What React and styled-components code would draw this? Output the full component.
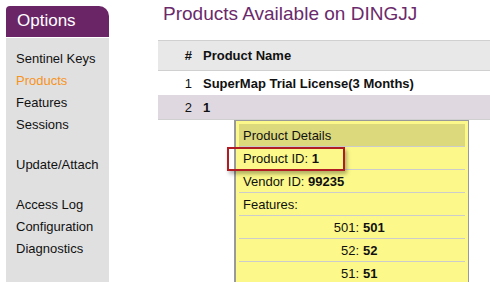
import React from 'react'
import styled, { createGlobalStyle } from 'styled-components'

const Global = createGlobalStyle`
  html, body {
    margin: 0;
    padding: 0;
    background: #fff;
    overflow: hidden;
    font-family: "Liberation Sans", Arial, sans-serif;
  }
`

const Page = styled.div`
  display: flex;
  align-items: flex-start;
  width: 490px;
  height: 282px;
  overflow: hidden;
`

const Sidebar = styled.div`
  margin: 6px 0 0 6px;
  width: 103px;
  flex-shrink: 0;
  display: flex;
  flex-direction: column;
`

const SideHead = styled.div`
  background: #6a2567;
  color: #fff;
  font-size: 17px;
  height: 31px;
  line-height: 30px;
  padding-left: 11px;
  border-radius: 4px 10px 0 0;
  border-bottom: 1px solid #fff;
`

const SideBody = styled.div`
  background: #e0e0e0;
  height: 260px;
  padding-top: 10px;
  display: flex;
  flex-direction: column;
`

const SideGroup = styled.div`
  display: flex;
  flex-direction: column;
  margin-bottom: 18px;
`

const SideLink = styled.div`
  font-size: 13px;
  line-height: 22px;
  padding-left: 10px;
  color: ${p => (p.$active ? '#f7931e' : '#111')};
`

const Main = styled.div`
  flex: 1;
  margin-left: 49px;
  display: flex;
  flex-direction: column;
`

const Title = styled.h1`
  margin: 0;
  font-weight: normal;
  font-size: 19px;
  line-height: 28px;
  color: #6b2a6b;
  padding-left: 5px;
  height: 40px;
`

const Table = styled.div`
  position: relative;
  display: flex;
  flex-direction: column;
  width: 340px;
`

const Row = styled.div`
  display: grid;
  grid-template-columns: 34px 1fr;
  align-items: center;
  font-size: 13px;
  color: #111;
  height: ${p => (p.$head ? 29 : 24)}px;
  background: ${p => (p.$head ? '#e8e8e8' : p.$hi ? '#e0d8e0' : '#fff')};
  border-top: ${p => (p.$head ? '1px solid #d0d0d0' : 'none')};
  border-bottom: ${p => (p.$head || p.$hi ? '1px solid #d0d0d0' : 'none')};
  font-weight: ${p => (p.$head ? 'bold' : 'normal')};
`

const Num = styled.span`
  text-align: right;
`

const Name = styled.span`
  padding-left: 11px;
  font-weight: bold;
`

const Tip = styled.div`
  position: absolute;
  left: 76px;
  top: 80px;
  width: 226px;
  padding: 3px;
  background: #fcf98a;
  border: 1px solid #999;
  border-left-width: 2px;
  font-size: 13px;
  color: #111;
`

const TipRow = styled.div`
  height: 22px;
  line-height: 23px;
  padding-left: 4px;
  border-bottom: 1px solid #ccc;
  background: ${p => (p.$head ? '#dcd87c' : 'transparent')};
`

const FeatRow = styled.div`
  display: grid;
  grid-template-columns: 120px 1fr;
  height: 22px;
  line-height: 23px;
  border-bottom: 1px solid #ccc;
`

const FeatKey = styled.span`
  text-align: right;
`

const Val = styled.b`
  padding-left: 4px;
`

const Mark = styled.div`
  position: absolute;
  left: -9px;
  top: 26px;
  width: 114px;
  height: 20px;
  border: 2px solid #b01c22;
  box-shadow: 2px 3px 4px rgba(0, 0, 0, 0.3);
`

const links = [
  ['Sentinel Keys', 'Products', 'Features', 'Sessions'],
  ['Update/Attach'],
  ['Access Log', 'Configuration', 'Diagnostics']
]

const features = ['501', '52', '51']

export default function App () {
  return (
    <Page>
      <Global />
      <Sidebar>
        <SideHead>Options</SideHead>
        <SideBody>
          {links.map((group, i) => (
            <SideGroup key={i}>
              {group.map(l => (
                <SideLink key={l} $active={l === 'Products'}>{l}</SideLink>
              ))}
            </SideGroup>
          ))}
        </SideBody>
      </Sidebar>
      <Main>
        <Title>Products Available on DINGJJ</Title>
        <Table>
          <Row $head>
            <Num>#</Num>
            <Name>Product Name</Name>
          </Row>
          <Row>
            <Num>1</Num>
            <Name>SuperMap Trial License(3 Months)</Name>
          </Row>
          <Row $hi>
            <Num>2</Num>
            <Name>1</Name>
          </Row>
          <Tip>
            <TipRow $head>Product Details</TipRow>
            <TipRow>Product ID: <b>1</b></TipRow>
            <TipRow>Vendor ID: <b>99235</b></TipRow>
            <TipRow>Features:</TipRow>
            {features.map(f => (
              <FeatRow key={f}>
                <FeatKey>{f}:</FeatKey>
                <Val>{f}</Val>
              </FeatRow>
            ))}
            <Mark />
          </Tip>
        </Table>
      </Main>
    </Page>
  )
}
